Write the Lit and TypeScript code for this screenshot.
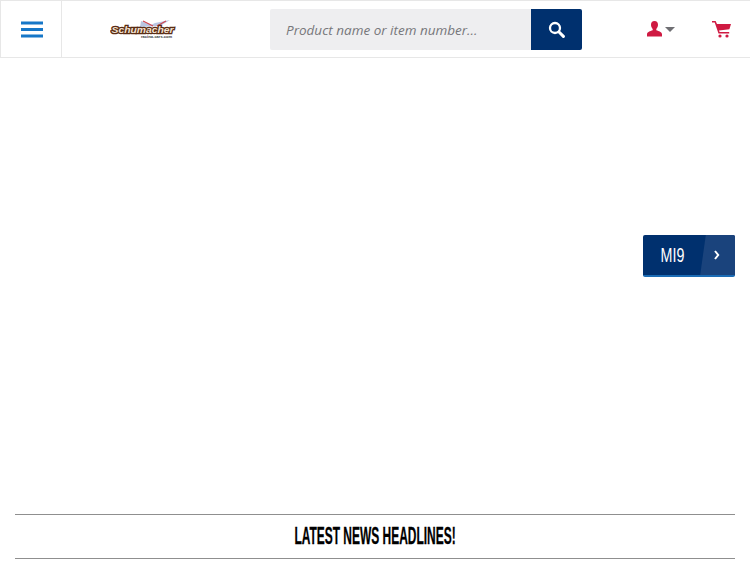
import { LitElement, html, css } from "lit";
import { customElement } from "lit/decorators.js";

@customElement("app-root")
export class AppRoot extends LitElement {
  static styles = css`
    :host { display: block; width: 750px; height: 563px; overflow: hidden; background: #fff; font-family: "Open Sans", sans-serif; }
    .header { box-sizing: border-box; height: 58px; display: flex; align-items: stretch; border: 1px solid #e7e7e7; border-right: 0; }
    .menu { width: 61px; box-sizing: border-box; padding-left: 2px; border-right: 1px solid #e7e7e7; display: flex; align-items: center; justify-content: center; }
    .menu svg { display: block; }
    .logo { width: 160px; margin-right: 48px; display: flex; align-items: center; justify-content: center; }
    .logo svg { display: block; margin-left: 1px; }
    .search { width: 312px; height: 41px; margin-top: 8px; display: flex; border-radius: 2px; overflow: hidden; }
    .field { flex: 1; background: #eeeef0; display: flex; align-items: center; padding-left: 16px; font-size: 13.5px; font-style: italic; color: #77777b; }
    .go { width: 51px; background: #00306e; display: flex; align-items: center; justify-content: center; }
    .user { margin-left: 65px; display: flex; align-items: center; gap: 3px; }
    .caret { width: 0; height: 0; border: 5px solid transparent; border-top-color: #6f6f73; border-bottom: 0; margin-top: 1px; }
    .cart { margin-left: 37px; display: flex; align-items: center; }
    .main { height: 456px; box-sizing: border-box; padding: 177px 15px 0; display: flex; justify-content: flex-end; align-items: flex-start; }
    .cta { width: 92px; height: 42px; box-sizing: border-box; position: relative; overflow: hidden; display: flex; background: #00306e; border-radius: 2px; border-bottom: 2px solid #1b6cb5; color: #fff; }
    .cta .label { width: 59px; text-align: center; line-height: 40px; font-family: "Liberation Sans", sans-serif; font-size: 21px; display: block; }
    .label span { display: inline-block; transform: scaleX(0.68); }
    .cta .side { position: absolute; top: 0; bottom: 0; right: -6px; width: 38px; background: #1a437c; transform: skewX(-8deg); }
    .cta .chev { position: absolute; right: 15px; top: 15px; }
    .news { margin: 0 15px; box-sizing: border-box; height: 45px; border-top: 1px solid #8f8f8f; border-bottom: 1px solid #8f8f8f; display: flex; align-items: center; justify-content: center; }
    .news h2 { margin: 0 0 1px; font-family: "Liberation Sans", sans-serif; font-weight: 700; font-size: 23px; color: #000; white-space: nowrap; transform: scaleX(0.52); line-height: 1; -webkit-text-stroke: 0.3px #000; }
    .logo text { font-family: "Liberation Sans", sans-serif; }
    .wordmark { paint-order: stroke; }
  `;

  render() {
    return html`
      <div class="header">
        <div class="menu">
          <svg width="22" height="17" viewBox="0 0 22 17"><path d="M0 0.5h22v3H0zM0 7h22v3H0zM0 13.500h22v3H0z" fill="#1677c8"/></svg>
        </div>
        <div class="logo">
          <svg width="66" height="18" viewBox="0 0 66 18">
            <path d="M31 1 L41 5 L45 3 L60 0 L50 6 L30 7 Z" fill="#b9c6e2"/>
            <path d="M33 1 L43 6 M47 6 L56 1" stroke="#cf4650" stroke-width="1.300"/>
            <text class="wordmark" x="1.500" y="12.500" font-size="9.800" font-weight="700" font-style="italic" fill="#f2e2d2" stroke="#5a2c14" stroke-width="2.600" textLength="62" lengthAdjust="spacingAndGlyphs">Schumacher</text>
            <text x="31" y="17.500" font-size="4" font-weight="700" fill="#333" textLength="31" lengthAdjust="spacingAndGlyphs">racing-cars.com</text>
          </svg>
        </div>
        <div class="search">
          <div class="field">Product name or item number...</div>
          <div class="go">
            <svg width="17" height="17" viewBox="0 0 17 17" fill="none" stroke="#fff"><circle cx="7" cy="7" r="5" stroke-width="2.300"/><path d="M10.800 10.800 15.400 15.400" stroke-width="3" stroke-linecap="round"/></svg>
          </div>
        </div>
        <div class="user">
          <svg width="15" height="16" viewBox="0 0 15 16"><path d="M7.500 0C5.200 0 4 1.700 4 3.800c0 1.600.7 3.200 1.700 4.100v1.300C3.200 10 0 10.800 0 13.300V15.500h15v-2.200c0-2.500-3.200-3.300-5.700-4.100V7.900C10.300 7 11 5.400 11 3.800 11 1.700 9.800 0 7.500 0Z" fill="#cf1a42"/></svg>
          <span class="caret"></span>
        </div>
        <div class="cart">
          <svg width="19" height="17" viewBox="0 0 19 17"><path d="M0 0h3.600l1.400 2.900H19l-1.600 5.400-10.400 1.200.6 1.500h9.600v1.400H6.500L2.700 1.400H0Z" fill="#cf1a42"/><circle cx="8" cy="15" r="1.600" fill="#cf1a42"/><circle cx="15" cy="15" r="1.600" fill="#cf1a42"/></svg>
        </div>
      </div>
      <div class="main">
        <div class="cta">
          <span class="label"><span>MI9</span></span>
          <span class="side"></span>
          <svg class="chev" width="6" height="10" viewBox="0 0 6 10" fill="none" stroke="#fff" stroke-width="2"><path d="M1 1 4.200 5 1 9"/></svg>
        </div>
      </div>
      <div class="news"><h2>LATEST NEWS HEADLINES!</h2></div>
    `;
  }
}
